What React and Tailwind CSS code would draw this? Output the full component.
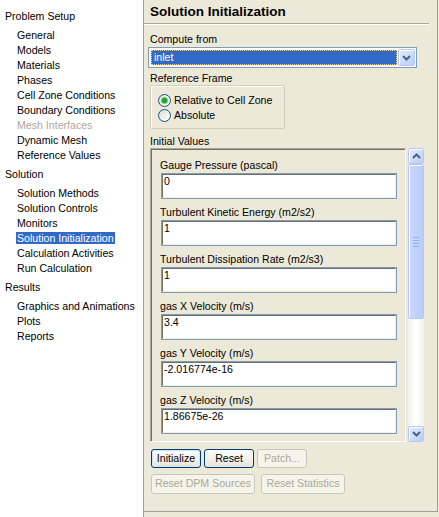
import React from "react";

const navGroups = [
  {
    title: "Problem Setup",
    items: [
      "General",
      "Models",
      "Materials",
      "Phases",
      "Cell Zone Conditions",
      "Boundary Conditions",
      "Mesh Interfaces",
      "Dynamic Mesh",
      "Reference Values",
    ],
  },
  {
    title: "Solution",
    items: [
      "Solution Methods",
      "Solution Controls",
      "Monitors",
      "Solution Initialization",
      "Calculation Activities",
      "Run Calculation",
    ],
  },
  {
    title: "Results",
    items: ["Graphics and Animations", "Plots", "Reports"],
  },
];

const fields = [
  { label: "Gauge Pressure (pascal)", value: "0" },
  { label: "Turbulent Kinetic Energy (m2/s2)", value: "1" },
  { label: "Turbulent Dissipation Rate (m2/s3)", value: "1" },
  { label: "gas X Velocity (m/s)", value: "3.4" },
  { label: "gas Y Velocity (m/s)", value: "-2.016774e-16" },
  { label: "gas Z Velocity (m/s)", value: "1.86675e-26" },
];

const Chevron = ({ up }) => (
  <svg width="9" height="6" viewBox="0 0 9 6">
    <path
      d={up ? "M1 5 L4.5 1.5 L8 5" : "M1 1 L4.5 4.5 L8 1"}
      fill="none"
      stroke="#4D6185"
      strokeWidth="2"
    />
  </svg>
);

const ArrowButton = ({ up, className = "" }) => (
  <div
    className={`flex items-center justify-center rounded-[2px] border border-[#B5C8F5] bg-gradient-to-br from-[#E3ECFE] to-[#B9CDF8] shadow-[inset_1px_1px_0_#fff] ${className}`}
  >
    <Chevron up={up} />
  </div>
);

const Radio = ({ checked }) => (
  <span className="flex h-[13px] w-[13px] items-center justify-center rounded-full border border-[#1C5180] bg-gradient-to-br from-[#DCDCD7] to-white">
    {checked && (
      <span className="h-[5px] w-[5px] rounded-full bg-[#21A121] shadow-[0_0_0_1px_#6BD46B]" />
    )}
  </span>
);

const XpButton = ({ children, width, primary, disabled }) => (
  <div
    className={`flex items-center justify-center rounded-[3px] border ${width} ${
      disabled
        ? "border-[#C9C7BA] bg-[#F5F4EA] text-[#ACA899]"
        : primary
        ? "border-[#003C74] bg-gradient-to-b from-white to-[#E6E4DA] text-black shadow-[inset_0_0_0_1px_#CEE7FF]"
        : "border-[#003C74] bg-gradient-to-b from-white to-[#E6E4DA] text-black"
    }`}
  >
    {children}
  </div>
);

const App = () => {
  return (
    <div className="flex h-[517px] w-[439px] overflow-hidden bg-[#ECE9D8] font-['Liberation_Sans',Arial,sans-serif] text-[10.6px] text-black">
      {/* Navigation tree */}
      <div className="h-full w-[144px] border-r border-[#A0A0A0] bg-white pt-[9px]">
        {navGroups.map((group, gi) => (
          <div key={group.title} className={gi > 0 ? "mt-[4px]" : ""}>
            <div className="h-[15px] pl-[5px] leading-[15px]">{group.title}</div>
            <div className="mt-[4px]">
              {group.items.map((item) => (
                <div key={item} className="h-[15px] pl-[16px] leading-[15px]">
                  {item === "Solution Initialization" ? (
                    <span className="bg-[#316AC5] px-[1px] text-white">{item}</span>
                  ) : item === "Mesh Interfaces" ? (
                    <span className="px-[1px] text-[#ACA899]">{item}</span>
                  ) : (
                    <span className="px-[1px]">{item}</span>
                  )}
                </div>
              ))}
            </div>
          </div>
        ))}
      </div>

      {/* Task page */}
      <div className="h-[512px] w-[294px] border-r border-b border-[#A0A0A0]">
        <div className="h-[24px] w-[285px] border-b border-[#ACA899] pl-[6px] pt-[4px] text-[13.5px] font-bold leading-[16px] shadow-[0_1px_0_#fff]">
          Solution Initialization
        </div>

        <div className="mt-[8px] h-[14px] pl-[6px] leading-[14px]">Compute from</div>
        <div className="ml-[4px] mt-[1px] flex h-[21px] w-[269px] items-center border border-[#7F9DB9] bg-white pl-[2px] pr-[1px]">
          <div className="flex h-[15px] w-[246px] items-center border border-dotted border-[#F0D080] bg-[#316AC5] pl-[2px] leading-[13px] text-white">
            inlet
          </div>
          <ArrowButton className="ml-auto h-[17px] w-[17px]" />
        </div>

        <div className="mt-[3px] h-[14px] pl-[6px] leading-[14px]">Reference Frame</div>
        <div className="ml-[6px] h-[44px] w-[135px] rounded-[2px] border border-[#D0D0BF] pl-[7px] pt-[7px] shadow-[inset_1px_1px_0_#fff]">
          <div className="flex h-[15px] items-center gap-[3px]">
            <Radio checked />
            <span>Relative to Cell Zone</span>
          </div>
          <div className="flex h-[15px] items-center gap-[3px]">
            <Radio />
            <span>Absolute</span>
          </div>
        </div>

        <div className="mt-[5px] h-[14px] pl-[6px] leading-[14px]">Initial Values</div>
        <div className="ml-[6px] flex h-[294px] items-stretch">
          <div className="h-[294px] w-[256px] overflow-hidden border border-t-[#ACA899] border-l-[#ACA899] border-r-white border-b-white">
            <div className="h-full border-t border-l border-[#716F64] pt-[8px]">
              {fields.map((f, i) => (
                <div key={f.label} className={i > 0 ? "mt-[6px]" : ""}>
                  <div className="h-[14px] pl-[8px] leading-[14px]">{f.label}</div>
                  <div className="ml-[9px] mt-[1px] h-[26px] w-[236px] border border-[#7F9DB9]">
                    <div className="h-full border border-t-[#716F64] border-l-[#716F64] border-r-[#F1EFE2] border-b-[#F1EFE2] bg-white pl-[1px] leading-[13px]">
                      {f.value}
                    </div>
                  </div>
                </div>
              ))}
            </div>
          </div>

          {/* Scrollbar */}
          <div className="ml-[2px] flex w-[16px] flex-col bg-gradient-to-r from-[#F3F1EC] via-[#FEFEFB] to-[#F3F1EC]">
            <ArrowButton up className="h-[16px] w-[16px]" />
            <div className="flex h-[155px] w-[16px] flex-col items-center justify-center gap-[2px] rounded-[2px] border border-[#B5C8F5] bg-gradient-to-r from-[#C9D8FC] to-[#BACDF8] shadow-[inset_1px_1px_0_#fff]">
              <span className="h-[1px] w-[6px] bg-[#8CB0F8]" />
              <span className="h-[1px] w-[6px] bg-[#8CB0F8]" />
              <span className="h-[1px] w-[6px] bg-[#8CB0F8]" />
              <span className="h-[1px] w-[6px] bg-[#8CB0F8]" />
            </div>
            <div className="flex-1" />
            <ArrowButton className="h-[16px] w-[16px]" />
          </div>
        </div>

        <div className="ml-[7px] mt-[7px] flex h-[19px] gap-[3px]">
          <XpButton width="w-[50px]" primary>
            Initialize
          </XpButton>
          <XpButton width="w-[50px]">Reset</XpButton>
          <XpButton width="w-[50px]" disabled>
            Patch...
          </XpButton>
        </div>
        <div className="ml-[7px] mt-[6px] flex h-[20px] gap-[6px]">
          <XpButton width="w-[104px]" disabled>
            Reset DPM Sources
          </XpButton>
          <XpButton width="w-[84px]" disabled>
            Reset Statistics
          </XpButton>
        </div>
      </div>
    </div>
  );
};

export default App;
